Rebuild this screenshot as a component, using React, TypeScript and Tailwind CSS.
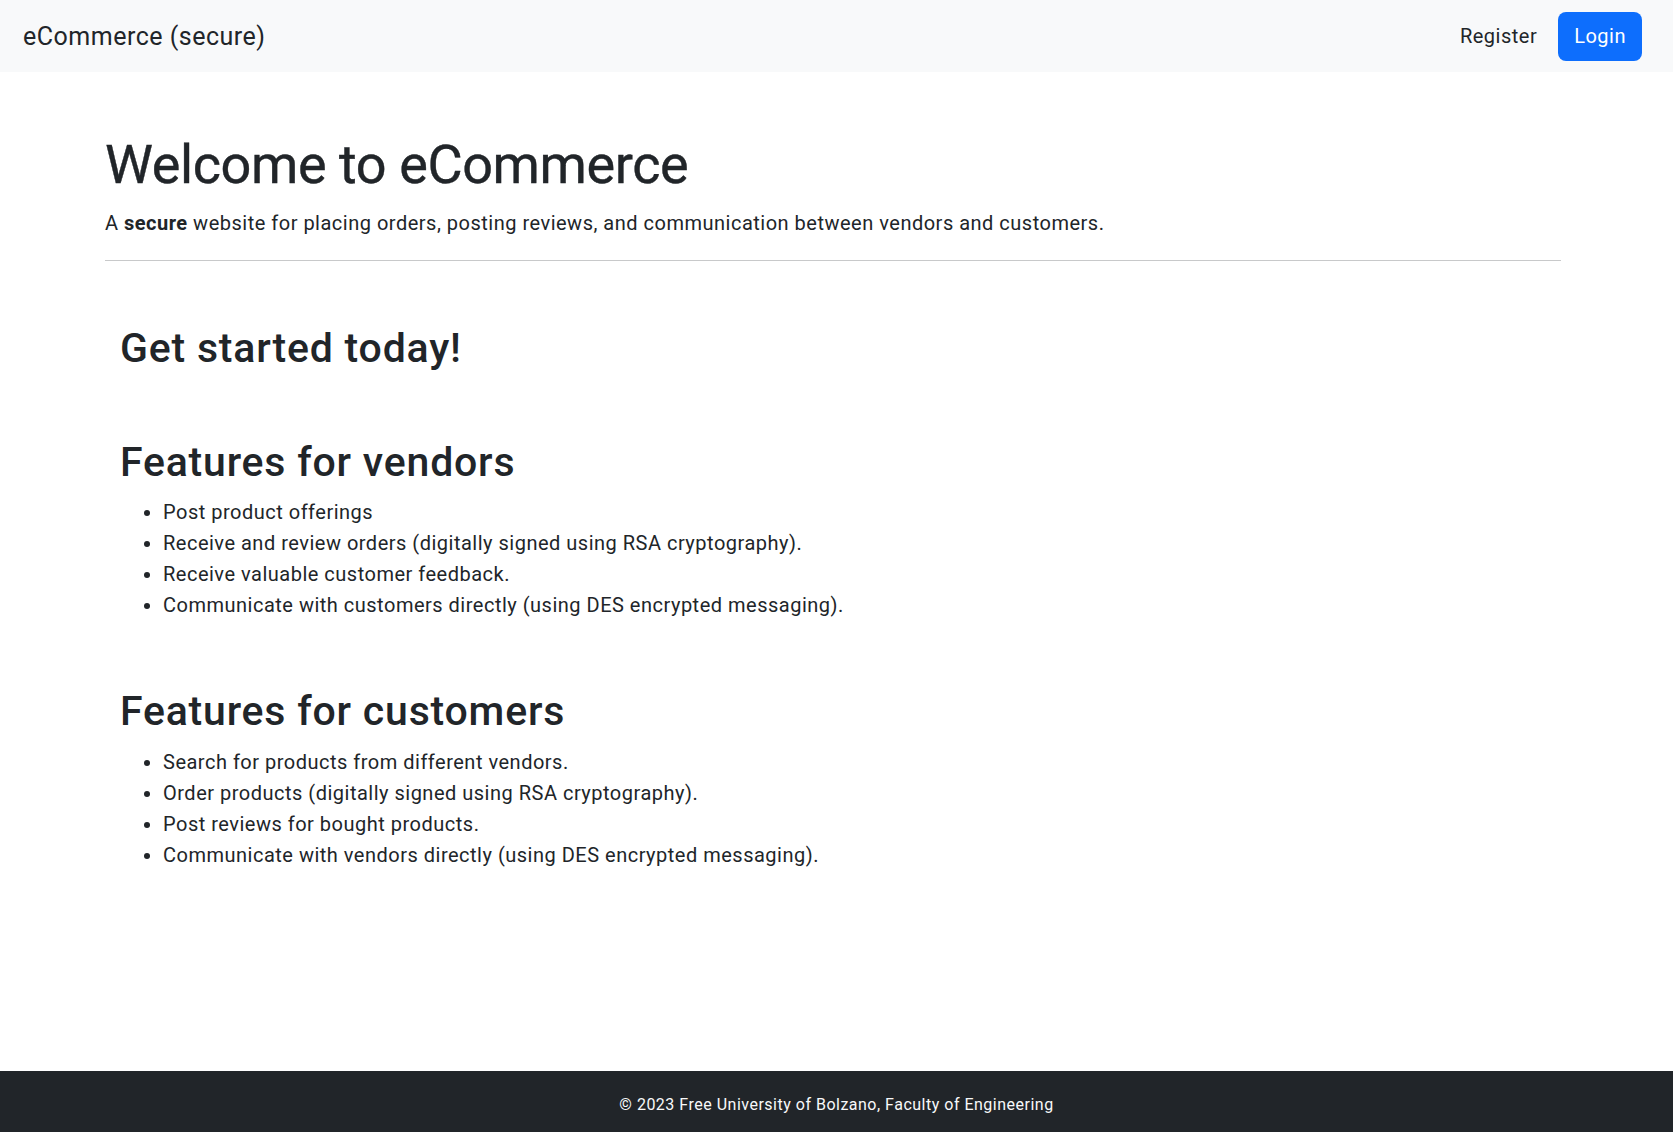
import React from 'react';

const vendorFeatures = [
  'Post product offerings',
  'Receive and review orders (digitally signed using RSA cryptography).',
  'Receive valuable customer feedback.',
  'Communicate with customers directly (using DES encrypted messaging).',
];

const customerFeatures = [
  'Search for products from different vendors.',
  'Order products (digitally signed using RSA cryptography).',
  'Post reviews for bought products.',
  'Communicate with vendors directly (using DES encrypted messaging).',
];

function FeatureList({ items }: { items: string[] }) {
  return (
    <ul className="list-disc pl-[43px] text-[20px] leading-[31px] tracking-[0.5px]">
      {items.map((item) => (
        <li key={item}>{item}</li>
      ))}
    </ul>
  );
}

export default function App() {
  return (
    <div className="flex min-h-screen flex-col bg-white font-['Roboto',sans-serif] text-[#212529]">
      {/* Navbar */}
      <nav className="flex h-[72px] items-center justify-between bg-[#f8f9fa] pl-[23px] pr-[31px]">
        <span className="text-[25px] leading-none tracking-[0.5px]">eCommerce (secure)</span>
        <div className="flex items-center">
          <a href="#" className="mr-[21px] text-[20px] tracking-[0.5px] text-[#212529]">
            Register
          </a>
          <button className="h-[49px] rounded-lg bg-[#0d6efd] px-[16px] text-[20px] tracking-[0.5px] text-white">
            Login
          </button>
        </div>
      </nav>

      {/* Content */}
      <main className="flex-1 pl-[105px] pr-[112px] pt-[61px]">
        <h1 className="mb-[10px] text-[54px] leading-[1.2] font-normal tracking-[-0.4px] [-webkit-text-stroke:0.4px_#212529]">
          Welcome to eCommerce
        </h1>
        <p className="text-[20px] leading-[30px] tracking-[0.5px]">
          A <strong className="font-bold">secure</strong> website for placing orders, posting reviews, and
          communication between vendors and customers.
        </p>
        <hr className="mt-[22px] border-t border-[#c8c9ca]" />

        <div className="pl-[15px]">
          <h2 className="mt-[63px] text-[41px] leading-[1.2] font-medium tracking-[0.8px]">Get started today!</h2>

          <h2 className="mt-[65px] mb-[10px] text-[41px] leading-[1.2] font-medium tracking-[0.8px]">
            Features for vendors
          </h2>
          <FeatureList items={vendorFeatures} />

          <h2 className="mt-[66px] mb-[11px] text-[41px] leading-[1.2] font-medium tracking-[0.8px]">
            Features for customers
          </h2>
          <FeatureList items={customerFeatures} />
        </div>
      </main>

      {/* Footer */}
      <footer className="flex h-[61px] items-center justify-center bg-[#212529] pt-[6px] text-[16px] tracking-[0.5px] text-[#f8f9fa]">
        © 2023 Free University of Bolzano, Faculty of Engineering
      </footer>
    </div>
  );
}
